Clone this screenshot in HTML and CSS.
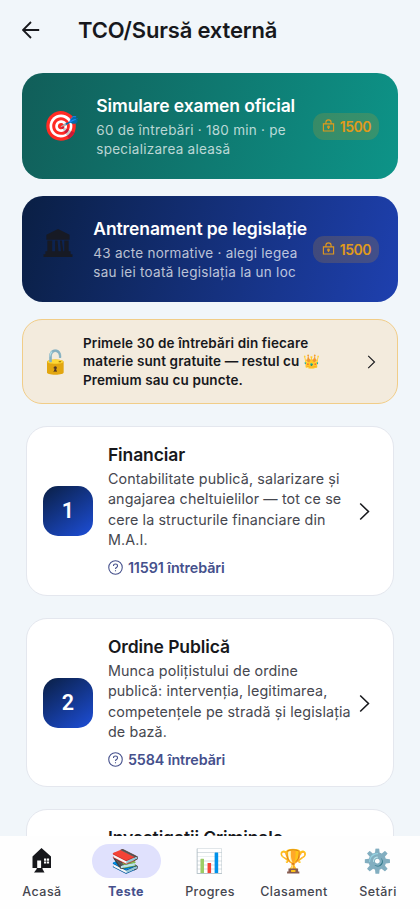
FILE: index.html
```html
<!DOCTYPE html>
<html lang="ro">
<head>
<meta charset="utf-8">
<meta name="viewport" content="width=device-width, initial-scale=1">
<title>TCO/Sursă externă</title>
<link rel="stylesheet" href="styles.css">
</head>
<body>
<svg class="defs" width="0" height="0">
  <symbol id="lock" viewBox="0 0 14 14"><path d="M1.500 5.300h11v7.600h-11zM4.200 5.300V3.800a2.800 2.800 0 0 1 5.600 0v1.500M7 9v1.700"/><circle cx="7" cy="8.600" r=".9"/></symbol>
  <symbol id="chevron" viewBox="0 0 12 20"><path d="M1.300 1.300 10.300 10l-9 8.700"/></symbol>
  <symbol id="question" viewBox="0 0 14 14"><circle cx="7" cy="7" r="6.300"/><path d="M5.100 5.600c0-2.400 3.800-2.400 3.800 0 0 1.500-1.900 1.300-1.900 2.700M7 9.600v1"/></symbol>
</svg>
<div class="app">
  <header class="topbar">
    <svg class="back" viewBox="0 0 18 18"><path d="M17.200 9H1.200M9 1 1 9l8 8"/></svg>
    <h1>TCO/Sursă externă</h1>
  </header>
  <main class="content">
    <section class="hero exam">
      <span class="emoji">🎯</span>
      <div class="hero-text"><h2>Simulare examen oficial</h2><p>60 de întrebări · 180 min · pe<br>specializarea aleasă</p></div>
      <span class="cost"><svg><use href="#lock"/></svg>1500</span>
    </section>
    <section class="hero law">
      <svg class="bank" viewBox="0 0 30 30"><path d="M15 0 27 6v5H3V6zM4 12h5v11H4zM12 12h2.500l1 11H12zM17 12h2l1.500 11H18zM21.500 12H26v11h-4.500zM2 23h26v3h2v3H0v-3h2z"/></svg>
      <div class="hero-text"><h2>Antrenament pe legislație</h2><p>43 acte normative · alegi legea<br>sau iei toată legislația la un loc</p></div>
      <span class="cost"><svg><use href="#lock"/></svg>1500</span>
    </section>
    <section class="banner">
      <span class="emoji">🔓</span>
      <p>Primele 30 de întrebări din fiecare<br>materie sunt gratuite — restul cu <span class="crown">👑</span><br>Premium sau cu puncte.</p>
      <svg class="chev"><use href="#chevron"/></svg>
    </section>
    <div class="modules">
      <article class="module">
        <span class="num">1</span>
        <div class="module-text"><h2>Financiar</h2>
          <p>Contabilitate publică, salarizare și<br>angajarea cheltuielilor — tot ce se<br>cere la structurile financiare din<br>M.A.I.</p>
          <div class="count"><svg><use href="#question"/></svg>11591 întrebări</div></div>
        <svg class="chev"><use href="#chevron"/></svg>
      </article>
      <article class="module">
        <span class="num">2</span>
        <div class="module-text"><h2>Ordine Publică</h2>
          <p>Munca polițistului de ordine<br>publică: intervenția, legitimarea,<br>competențele pe stradă și legislația<br>de bază.</p>
          <div class="count"><svg><use href="#question"/></svg>5584 întrebări</div></div>
        <svg class="chev"><use href="#chevron"/></svg>
      </article>
      <article class="module">
        <div class="module-text third"><h2>Investigații Criminale</h2></div>
      </article>
    </div>
  </main>
  <nav class="nav">
    <div class="tab"><span class="pill"><svg class="house" viewBox="0 0 20 25"><path fill-rule="evenodd" d="M9.500 0 19 8.500V20H10.500v1l2 3.500H2L4.700 21v-1H.5V8.500zM5.200 12.500V20h3.900v-7.500zM12 10.500v2.200h2.200v-2.200zM14.900 10.500v2.200h2.200v-2.200zM12 13.400v2.200h2.200v-2.200zM14.900 13.400v2.200h2.200v-2.200z"/></svg></span><span>Acasă</span></div>
    <div class="tab active"><span class="pill">📚</span><span>Teste</span></div>
    <div class="tab"><span class="pill">📊</span><span>Progres</span></div>
    <div class="tab"><span class="pill">🏆</span><span>Clasament</span></div>
    <div class="tab"><span class="pill">⚙️</span><span>Setări</span></div>
  </nav>
</div>
</body>
</html>
```
FILE: styles.css
```css
* { box-sizing: border-box; }
body { margin: 0; background: #f1f6fa; color: #17181c; font-family: Inter, "Noto Color Emoji", sans-serif; }
h1, h2, p { margin: 0; white-space: nowrap; }
svg { fill: none; stroke: currentColor; flex: none; }
.defs { display: block; }
.app { height: 909px; display: flex; flex-direction: column; overflow: hidden; }
.topbar { height: 73px; flex: none; display: flex; align-items: flex-start; padding: 15px 22px 0; }
.back { width: 18px; height: 18px; margin: 6px 38px 0 0; stroke-width: 1.8; }
h1 { font-size: 22px; line-height: 30px; font-weight: 600; letter-spacing: -.17px; }
.content { flex: 1; min-height: 0; overflow: hidden; padding: 0 21.6px; }
.hero { height: 106px; border-radius: 21px; display: flex; align-items: center; padding: 0 19px 0 21.7px; margin-bottom: 17px; color: #fff; }
.exam { background: linear-gradient(106deg, #115e59, #0d9488); }
.law { background: linear-gradient(106deg, #0a1f44, #1e40af); }
.hero .emoji { width: 53px; font-size: 29px; line-height: 36px; text-indent: 0; }
.bank { width: 30px; height: 29px; fill: #171a24; stroke: none; margin: -12px 20px 0 0; }
.hero-text { flex: 1; }
.hero h2 { font-size: 17.5px; line-height: 25px; font-weight: 600; letter-spacing: -.1px; }
.hero p { font-size: 13.5px; line-height: 19.3px; letter-spacing: .26px; color: rgba(255,255,255,.72); margin-top: 3px; }
.cost { width: 66px; height: 27px; flex: none; display: flex; align-items: center; justify-content: center; gap: 5px; border-radius: 11px; background: rgba(245,158,11,.18); color: #e19a1b; font-size: 14px; font-weight: 600; letter-spacing: -.5px; }
.cost svg { width: 13px; height: 13px; stroke-width: 1.2; margin-top: -2px; }
.banner { height: 85px; border: 1px solid #f1cd88; border-radius: 20px; background: #f3ebdd; display: flex; align-items: center; padding: 0 21.5px 0 18.4px; }
.banner .emoji { width: 42px; font-size: 23px; }
.banner p { flex: 1; font-size: 13.5px; line-height: 18.4px; font-weight: 600; letter-spacing: .12px; }
.crown { font-size: 13.5px; }
.banner .chev { width: 9px; height: 14px; stroke-width: 1.6; }
.modules { padding: 22px 4.5px 0; display: flex; flex-direction: column; gap: 22px; }
.module { height: 169.7px; flex: none; display: flex; align-items: center; border: 1px solid #e4e7ee; border-radius: 21px; background: #fff; padding: 0 22.5px 0 15.8px; }
.num { width: 50px; height: 50px; border-radius: 15px; background: linear-gradient(145deg, #0a1f44, #1d4ed8); color: #fff; display: flex; align-items: center; justify-content: center; font-family: Roboto, sans-serif; font-size: 21.5px; font-weight: 600; margin-right: 15px; }
.module-text { flex: 1; min-width: 0; }
.module h2 { font-size: 17.5px; line-height: 25px; font-weight: 600; letter-spacing: -.1px; margin-top: -2px; }
.module p { font-size: 14.3px; line-height: 20.5px; letter-spacing: .13px; color: #46474f; margin-top: 2px; }
.count { display: flex; align-items: center; gap: 5px; margin-top: 7px; font-size: 14.3px; line-height: 20px; font-weight: 600; letter-spacing: -.08px; color: #45508c; }
.count svg { width: 15px; height: 15px; stroke-width: 1; }
.module .chev { width: 11px; height: 19px; stroke-width: 1.7; margin-top: 1px; }
.third { align-self: flex-start; padding: 17px 0 0 65px; }
.nav { height: 73px; flex: none; background: #fefefe; display: grid; grid-template-columns: repeat(5, 1fr); padding-top: 8px; }
.tab { display: flex; flex-direction: column; align-items: center; font-size: 12.5px; line-height: 18px; letter-spacing: .45px; font-weight: 500; color: #45464f; }
.pill { width: 69px; height: 34px; border-radius: 17px; display: flex; align-items: center; justify-content: center; font-size: 23px; margin-bottom: 5px; }
.active { color: #45508c; font-weight: 700; }
.active .pill { background: #e0e1fd; }
.house { width: 20px; height: 25px; fill: #17181c; stroke: none; margin-top: -1px; }
```
